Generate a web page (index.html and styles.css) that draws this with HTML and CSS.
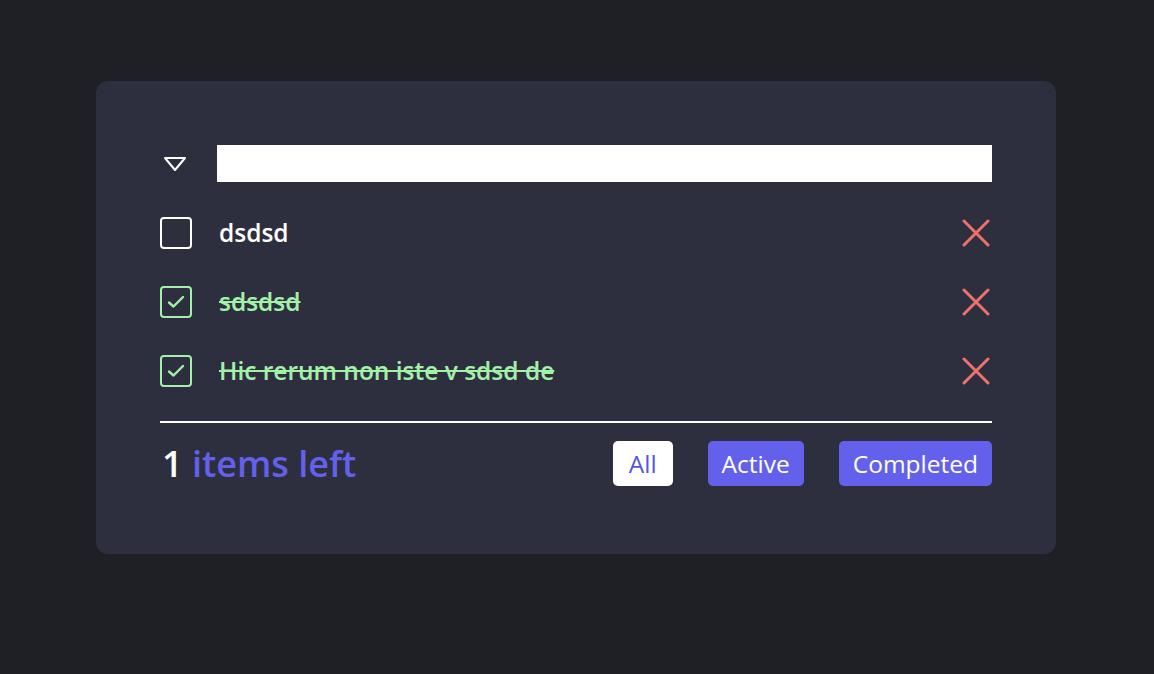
FILE: index.html
```html
<!DOCTYPE html>
<html lang="en">
<head>
<meta charset="utf-8">
<title>Todos</title>
<link rel="stylesheet" href="styles.css">
</head>
<body>
<main class="card">
  <div class="header">
    <button class="toggle-all" aria-label="Toggle all">
      <svg width="24" height="16" viewBox="0 0 24 16"><path d="M2 2 H22 L12 14 Z" fill="none" stroke="#fff" stroke-width="2" stroke-linejoin="round"/></svg>
    </button>
    <input class="new-todo" type="text">
  </div>
  <ul class="list">
    <li class="item">
      <span class="check"></span>
      <span class="label">dsdsd</span>
      <span class="remove"><svg width="28" height="28" viewBox="0 0 28 28"><path d="M2 2 L26 26 M26 2 L2 26" stroke="#f0716a" stroke-width="3" stroke-linecap="round"/></svg></span>
    </li>
    <li class="item done">
      <span class="check"><svg width="20" height="16" viewBox="0 0 20 16"><path d="M3 8.5 L7.5 12.5 L17 3" fill="none" stroke="#a3f0a8" stroke-width="2.4" stroke-linecap="round" stroke-linejoin="round"/></svg></span>
      <span class="label">sdsdsd</span>
      <span class="remove"><svg width="28" height="28" viewBox="0 0 28 28"><path d="M2 2 L26 26 M26 2 L2 26" stroke="#f0716a" stroke-width="3" stroke-linecap="round"/></svg></span>
    </li>
    <li class="item done">
      <span class="check"><svg width="20" height="16" viewBox="0 0 20 16"><path d="M3 8.5 L7.5 12.5 L17 3" fill="none" stroke="#a3f0a8" stroke-width="2.4" stroke-linecap="round" stroke-linejoin="round"/></svg></span>
      <span class="label">Hic rerum non iste v sdsd de</span>
      <span class="remove"><svg width="28" height="28" viewBox="0 0 28 28"><path d="M2 2 L26 26 M26 2 L2 26" stroke="#f0716a" stroke-width="3" stroke-linecap="round"/></svg></span>
    </li>
  </ul>
  <footer class="footer">
    <div class="count"><span class="num">1</span> <span class="left">items left</span></div>
    <div class="filters">
      <button class="filter selected">All</button>
      <button class="filter">Active</button>
      <button class="filter">Completed</button>
    </div>
  </footer>
</main>
</body>
</html>
```
FILE: styles.css
```css
* { box-sizing: border-box; }
html, body { margin: 0; padding: 0; }
body {
  background: #1f2025;
  font-family: "Open Sans", "Noto Sans", sans-serif;
  color: #fff;
  min-height: 674px;
}
.card {
  width: 960px;
  margin: 81px 0 0 96px;
  background: #2d2f3e;
  border-radius: 12px;
  padding: 64px 64px 68px;
}
.header {
  display: flex;
  align-items: center;
  height: 37px;
}
.toggle-all {
  background: none;
  border: 0;
  padding: 0;
  margin: 0 29px 0 3px;
  width: 25px;
  height: 16px;
  display: flex;
}
.new-todo {
  flex: 1;
  height: 37px;
  border: 0;
  background: #fff;
  outline: none;
  padding: 0 10px;
}
.list {
  list-style: none;
  margin: 35px 0 0;
  padding: 0;
  display: flex;
  flex-direction: column;
  gap: 37px;
}
.item {
  display: flex;
  align-items: center;
  height: 32px;
}
.check {
  width: 32px;
  height: 32px;
  border: 2px solid #fff;
  border-radius: 4px;
  display: flex;
  align-items: center;
  justify-content: center;
  flex: none;
}
.label {
  flex: 1;
  margin-left: 27px;
  font-size: 24.5px;
  font-weight: 600;
  line-height: 32px;
  color: #fff;
}
.done .check { border-color: #a3f0a8; }
.done .label {
  color: #a3f0a8;
  text-decoration: line-through;
  text-decoration-thickness: 2px;
}
.remove {
  width: 28px;
  height: 28px;
  margin-right: 2px;
  display: flex;
}
.footer {
  margin-top: 34px;
  border-top: 2px solid #fff;
  padding-top: 18px;
  display: flex;
  align-items: center;
  justify-content: space-between;
}
.count {
  font-size: 36px;
  font-weight: 600;
  line-height: 45px;
  padding-left: 2px;
}
.num { color: #fff; }
.left { color: #6361ec; }
.filters {
  display: flex;
  gap: 35px;
}
.filter {
  font-family: inherit;
  font-size: 24.5px;
  font-weight: 500;
  height: 45px;
  padding: 0 14px;
  border: 0;
  border-radius: 5px;
  background: #6361ec;
  color: #fff;
}
.filter.selected {
  background: #fff;
  color: #5854e0;
  padding: 0 16px;
}
```
